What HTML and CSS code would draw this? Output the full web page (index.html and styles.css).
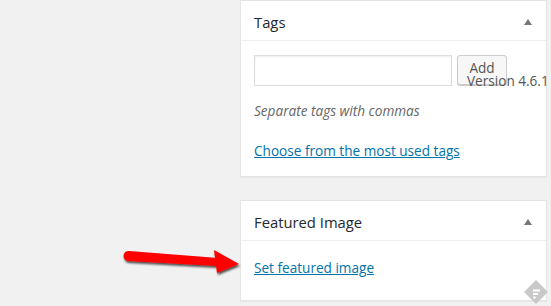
FILE: index.html
```html
<!DOCTYPE html>
<html lang="en">
<head>
    <meta charset="UTF-8">
    <meta name="viewport" content="width=device-width, initial-scale=1.0">
    <title>Post sidebar</title>
    <link rel="stylesheet" href="styles.css">
</head>
<body>
    <main class="sidebar">
        <div class="postbox">
            <div class="postbox-header">
                <h2>Tags</h2>
                <span class="toggle"></span>
            </div>
            <div class="inside">
                <div class="tag-row">
                    <input type="text" class="tag-input">
                    <button class="button">Add</button>
                    <span class="version">Version 4.6.1</span>
                </div>
                <p class="howto">Separate tags with commas</p>
                <a href="#" class="link">Choose from the most used tags</a>
            </div>
        </div>

        <div class="postbox featured">
            <div class="postbox-header">
                <h2>Featured Image</h2>
                <span class="toggle"></span>
            </div>
            <div class="inside">
                <a href="#" class="link">Set featured image</a>
            </div>
        </div>
    </main>

    <!-- red pointer drawn over the screenshot -->
    <svg class="pointer" width="130" height="40" viewBox="0 0 130 40">
        <defs>
            <filter id="shadow" x="-10%" y="-30%" width="130%" height="160%">
                <feDropShadow dx="1" dy="2" stdDeviation="1.2" flood-color="#000" flood-opacity="0.7"/>
            </filter>
        </defs>
        <g filter="url(#shadow)" fill="#f00">
            <path d="M7 8 L96 15 L96 23 L6 18 A5 5 0 0 1 7 8 Z"/>
            <path d="M92 7 L117 21 L95 30 Z"/>
        </g>
    </svg>

    <svg class="badge" width="26" height="26" viewBox="0 0 26 26">
        <path d="M13 1 L25 13 L13 25 L1 13 Z" fill="#c9c9c9"/>
        <path d="M10 11.5 L17 11.5 M10 15 L15 15" stroke="#fff" stroke-width="2"/>
        <circle cx="11.5" cy="18.5" r="1.3" fill="#fff"/>
    </svg>
</body>
</html>
```

FILE: styles.css
```css
body {
    margin: 0;
    background-color: #f1f1f1;
    font-family: "Open Sans", "Noto Sans", sans-serif;
    font-size: 13.6px;
    color: #444;
    width: 551px;
    height: 306px;
    overflow: hidden;
}
.sidebar {
    display: flex;
    flex-direction: column;
    gap: 23px;
    width: 307px;
    margin-left: 240px;
}
.postbox {
    background-color: #fff;
    border: 1px solid #e5e5e5;
    box-shadow: 0 1px 1px rgba(0, 0, 0, 0.04);
}
.postbox-header {
    display: flex;
    align-items: center;
    justify-content: space-between;
    height: 39px;
    padding: 0 14px 0 13px;
    border-bottom: 1px solid #eee;
}
.postbox-header h2 {
    margin: 2px 0 0;
    font-size: 14.8px;
    font-weight: normal;
    color: #23282d;
}
.toggle {
    width: 0;
    height: 0;
    border-left: 4px solid transparent;
    border-right: 4px solid transparent;
    border-bottom: 6px solid #72777c;
    margin-top: 2px;
}
.inside {
    padding: 14px 12px 15px 13px;
}
.tag-row {
    display: flex;
    align-items: flex-start;
    position: relative;
}
.tag-input {
    width: 198px;
    height: 31px;
    box-sizing: border-box;
    border: 1px solid #ddd;
    box-shadow: inset 0 1px 2px rgba(0, 0, 0, 0.07);
    margin: 0;
}
.button {
    margin-left: 5px;
    width: 50px;
    height: 30px;
    box-sizing: border-box;
    background-color: #f7f7f7;
    border: 1px solid #ccc;
    border-radius: 3px;
    box-shadow: 0 1px 0 #ccc;
    font-family: inherit;
    font-size: 13.6px;
    color: #555;
    padding: 0;
    line-height: 18px;
    display: flex;
    justify-content: center;
    align-items: flex-start;
    padding-top: 3px;
}
.version {
    position: absolute;
    left: 213px;
    top: 16px;
    font-size: 13.6px;
    color: #555;
    white-space: nowrap;
}
.howto {
    margin: 15px 0 0;
    font-style: italic;
    color: #666;
    line-height: 20px;
}
.link {
    display: inline-block;
    margin-top: 20px;
    color: #0073aa;
    text-decoration: underline;
    line-height: 20px;
}
.featured .inside {
    padding-top: 17px;
    padding-bottom: 22px;
}
.featured .link {
    margin-top: 0;
}
.pointer {
    position: absolute;
    left: 122px;
    top: 243px;
}
.badge {
    position: absolute;
    left: 523px;
    top: 279px;
}
```
